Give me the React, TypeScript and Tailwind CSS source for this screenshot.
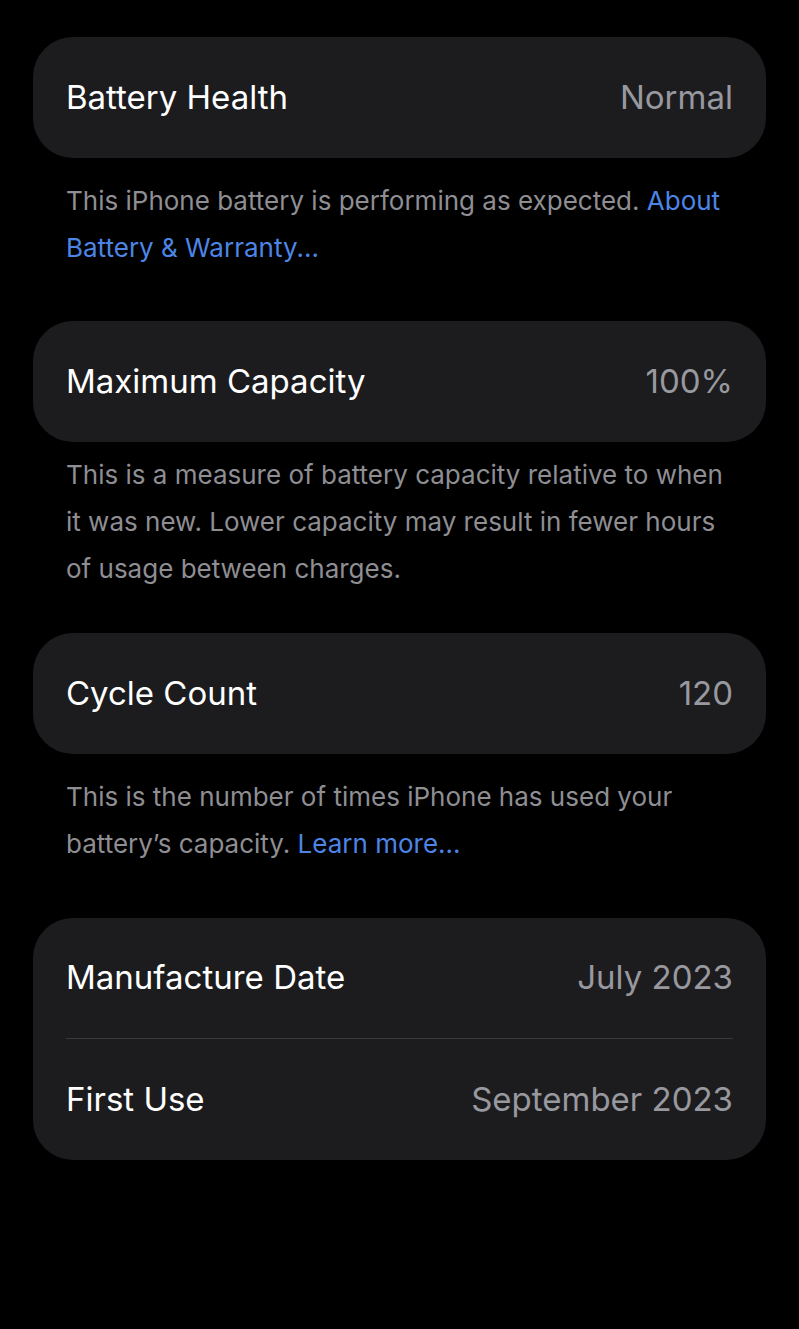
const Row = ({ label, value, tall }: { label: string; value: string; tall?: boolean }) => (
  <div className={`flex items-center justify-between px-[33px] ${tall ? 'h-[121px]' : 'h-[120px]'}`}>
    <span className="text-[33px] text-white">{label}</span>
    <span className="text-[33px] text-[#98989f]">{value}</span>
  </div>
);

const Card = ({ children }: { children: React.ReactNode }) => (
  <div className="mx-[33px] overflow-hidden rounded-[40px] bg-[#1c1c1e]">{children}</div>
);

const Footer = ({ children, className }: { children: React.ReactNode; className: string }) => (
  <p className={`px-[66px] text-[26px] leading-[47px] text-[#8e8e93] ${className}`}>{children}</p>
);

const Link = ({ children }: { children: React.ReactNode }) => (
  <span className="text-[#4d85e6]">{children}</span>
);

export default function App() {
  return (
    <div className="min-h-[1329px] bg-black pt-[37px] font-['Inter','Noto_Sans',sans-serif] antialiased">
      <Card>
        <Row label="Battery Health" value="Normal" tall />
      </Card>
      <Footer className="mt-[19px] mb-[50px]">
        This iPhone battery is performing as expected. <Link>About</Link>
        <br />
        <Link>Battery &amp; Warranty...</Link>
      </Footer>

      <Card>
        <Row label="Maximum Capacity" value="100%" tall />
      </Card>
      <Footer className="mt-[9px] mb-[41px]">
        This is a measure of battery capacity relative to when
        <br />
        it was new. Lower capacity may result in fewer hours
        <br />
        of usage between charges.
      </Footer>

      <Card>
        <Row label="Cycle Count" value="120" tall />
      </Card>
      <Footer className="mt-[19px] mb-[51px]">
        This is the number of times iPhone has used your
        <br />
        battery’s capacity. <Link>Learn more...</Link>
      </Footer>

      <Card>
        <Row label="Manufacture Date" value="July 2023" />
        <div className="mx-[33px] h-px bg-[#3a3a3c]" />
        <Row label="First Use" value="September 2023" tall />
      </Card>
    </div>
  );
}
